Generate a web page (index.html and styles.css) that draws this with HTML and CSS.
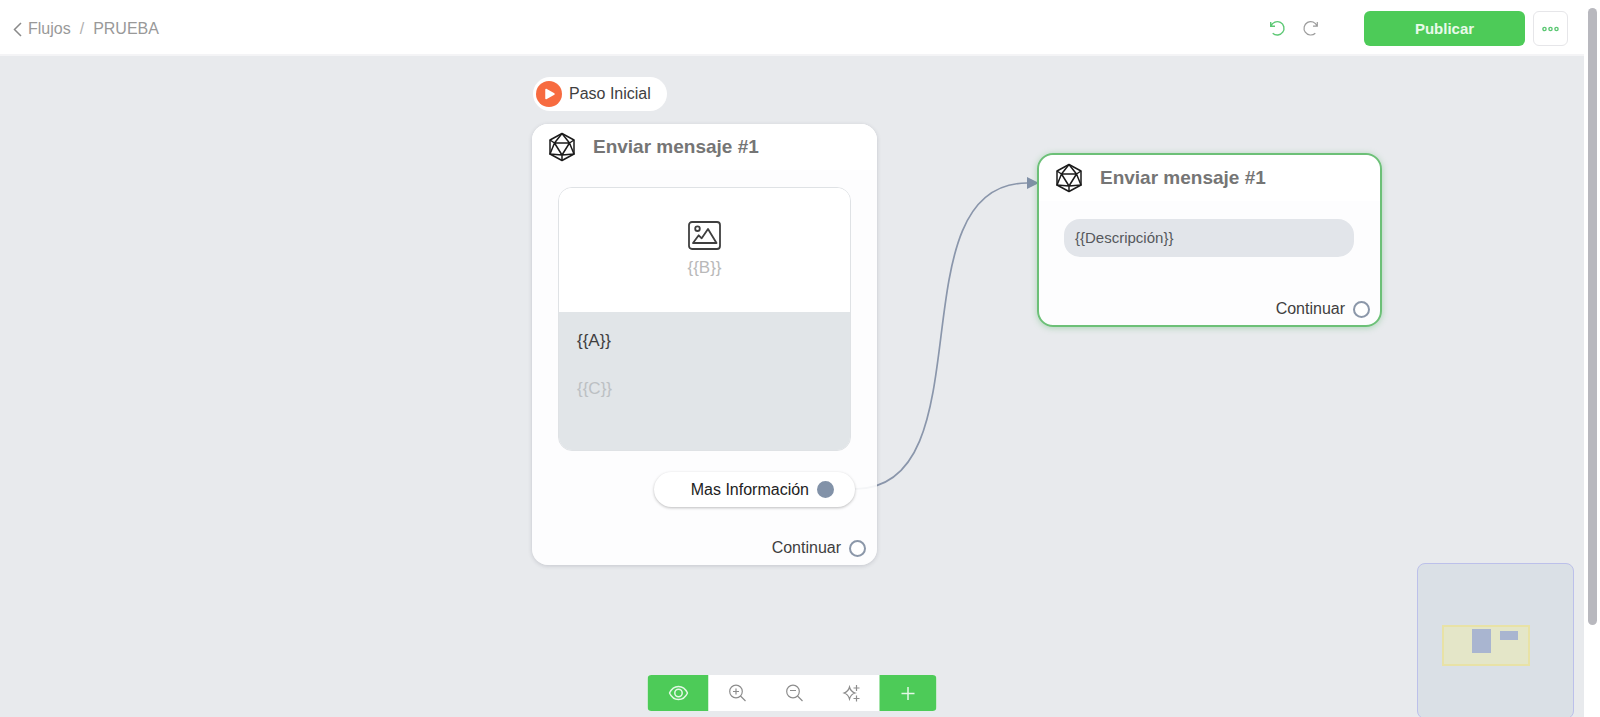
FILE: index.html
```html
<!DOCTYPE html>
<html lang="es">
<head>
<meta charset="utf-8">
<title>Flujos / PRUEBA</title>
<link rel="stylesheet" href="styles.css">
</head>
<body>
<svg class="symbols" aria-hidden="true">
  <symbol id="ico" viewBox="0 0 28 30">
    <g fill="none" stroke="#1b1b1b" stroke-width="1.5" stroke-linejoin="round">
      <path d="M14 1.500 26 8v14l-12 6.500L2 22V8z"/>
      <path d="M6.500 11h15L14 23zM14 1.500 6.500 11 2 8M14 1.500 21.500 11 26 8M6.500 11 2 22l12 1 12-1-4.500-11M14 23v5.500"/>
    </g>
  </symbol>
</svg>
<div class="app">
  <div class="workspace">
    <header class="topbar">
      <nav class="crumbs">
        <a class="back" href="#">
          <svg width="9" height="15" viewBox="0 0 9 15"><path d="M8 1 1.500 7.500 8 14" fill="none" stroke="#8a8a8a" stroke-width="1.5"/></svg>
          Flujos</a>
        <span class="slash">/</span>
        <span>PRUEBA</span>
      </nav>
      <div class="actions">
        <div class="history">
          <button class="plain" aria-label="Deshacer">
            <svg width="17" height="17" viewBox="0 0 17 17" fill="none" stroke="#5cc874" stroke-width="1.4"><path d="M1.700 2v4.200h4.300M2 6a6.700 6.700 0 1 1 1.700 7.200"/></svg>
          </button>
          <button class="plain" aria-label="Rehacer">
            <svg width="17" height="17" viewBox="0 0 17 17" fill="none" stroke="#9b9b9b" stroke-width="1.2"><path d="M15.300 2v4.200H11M15 6a6.700 6.700 0 1 0-1.700 7.200"/></svg>
          </button>
        </div>
        <button class="publish">Publicar</button>
        <button class="more" aria-label="Más opciones">
          <svg width="17" height="6" viewBox="0 0 17 6" fill="none" stroke="#5cc874" stroke-width="1.4"><circle cx="2.500" cy="3" r="1.600"/><circle cx="8.500" cy="3" r="1.600"/><circle cx="14.500" cy="3" r="1.600"/></svg>
        </button>
      </div>
    </header>

    <main class="canvas">
      <svg class="edges" aria-hidden="true">
        <path d="M855 433C989 433 893 127 1027 127" fill="none" stroke="#8a96ab" stroke-width="1.7"/>
        <path d="M1027 121l12 6-12 6z" fill="#8090a7"/>
      </svg>

      <div class="start-tag">
        <svg width="26" height="26" viewBox="0 0 26 26"><circle cx="13" cy="13" r="13" fill="#f76b40"/><path d="M10 8.500v9l8-4.500z" fill="#fff" stroke="#fff" stroke-width="1.500" stroke-linejoin="round"/></svg>
        <span>Paso Inicial</span>
      </div>

      <article class="node node-main">
        <h2 class="node-head"><svg class="node-icon"><use href="#ico"/></svg>Enviar mensaje #1</h2>
        <div class="media">
          <div class="picture">
            <svg width="33" height="29" viewBox="0 0 33 29" fill="none" stroke="#3f3f3f" stroke-width="1.800" stroke-linejoin="round"><rect x="1" y="1" width="31" height="27" rx="3"/><circle cx="9.500" cy="7.700" r="2.300"/><path d="M5 22h23.500L20 8l-6.300 9.300-3-3z"/></svg>
            <span>{{B}}</span>
          </div>
          <div class="copy">
            <span class="copy-title">{{A}}</span>
            <span class="copy-text">{{C}}</span>
          </div>
        </div>
        <button class="option">Mas Información<span class="port port-on"></span></button>
        <div class="next">Continuar<span class="port"></span></div>
      </article>

      <article class="node node-active">
        <h2 class="node-head"><svg class="node-icon"><use href="#ico"/></svg>Enviar mensaje #1</h2>
        <div class="bubble">{{Descripción}}</div>
        <div class="next">Continuar<span class="port"></span></div>
      </article>

      <div class="toolbar">
        <button class="tool tool-green tool-wide" aria-label="Vista previa">
          <svg width="20" height="16" viewBox="0 0 20 16" fill="none" stroke="#e4f8e6" stroke-width="1.500"><path d="M1 8C3 3.700 6 1.400 10 1.400S17 3.700 19 8c-2 4.300-5 6.600-9 6.600S3 12.300 1 8z"/><circle cx="10" cy="8" r="3.700"/></svg>
        </button>
        <button class="tool" aria-label="Acercar">
          <svg width="18" height="18" viewBox="0 0 18 18" fill="none" stroke="#8d8d8d" stroke-width="1.200"><circle cx="7.500" cy="7.500" r="6.300"/><path d="M12 12l5 5M7.500 4.500v6M4.500 7.500h6"/></svg>
        </button>
        <button class="tool" aria-label="Alejar">
          <svg width="18" height="18" viewBox="0 0 18 18" fill="none" stroke="#8d8d8d" stroke-width="1.200"><circle cx="7.500" cy="7.500" r="6.300"/><path d="M12 12l5 5M4.500 6.500h6"/></svg>
        </button>
        <button class="tool" aria-label="Ordenar">
          <svg width="18" height="18" viewBox="0 0 18 18" fill="none" stroke="#8d8d8d" stroke-width="1.200"><path d="M7 3c1 3.700 2 4.900 5.500 6C9 10.100 8 11.300 7 15c-1-3.700-2-4.900-5.500-6C5 7.900 6 6.700 7 3zM14 1v6M11 4h6M14 11.500v6M11 14.500h6"/></svg>
        </button>
        <button class="tool tool-green" aria-label="Añadir">
          <svg width="15" height="15" viewBox="0 0 15 15" fill="none" stroke="#e4f8e6" stroke-width="1.500"><path d="M7.500 1v13M1 7.500h13"/></svg>
        </button>
      </div>

      <div class="minimap">
        <svg width="155" height="154" viewBox="0 0 155 154" aria-hidden="true"><rect x="25" y="62" width="86" height="39" fill="#e4e6c8" stroke="#e8e2a6" stroke-width="2"/><rect x="54" y="65" width="19" height="24" fill="#a9b5d0"/><rect x="82" y="67" width="18" height="9" fill="#a9b5d0"/></svg>
      </div>
    </main>
  </div>
  <div class="scroll"><div class="thumb"></div></div>
</div>
</body>
</html>
```
FILE: styles.css
```css
* { box-sizing: border-box; }
body {
  margin: 0;
  font: 16px/20px "Liberation Sans", Arial, sans-serif;
  color: #3f3f3f;
  background: #fff;
}
button { font: inherit; color: inherit; border: 0; padding: 0; cursor: pointer; }
svg { display: block; flex: none; }
.symbols { position: absolute; width: 0; height: 0; }

.app { display: flex; height: 100vh; overflow: hidden; }
.workspace { flex: 1; min-width: 0; display: flex; flex-direction: column; }

.topbar {
  display: flex;
  align-items: center;
  justify-content: space-between;
  height: 56px;
  flex: none;
  padding: 0 16px 0 13px;
  border-bottom: 2px solid #f4f4f6;
}
.crumbs { display: flex; align-items: center; gap: 9px; color: #999; padding-top: 4px; }
.back { display: flex; align-items: center; gap: 6px; color: inherit; text-decoration: none; }
.slash { color: #b0b0b0; }
.actions { display: flex; align-items: center; gap: 8px; padding-top: 3px; }
.history { display: flex; gap: 16px; margin-right: 37px; }
.plain { background: none; }
.publish {
  width: 161px;
  height: 35px;
  border-radius: 6px;
  background: #4dcb58;
  color: #e9faea;
  font-size: 15px;
  font-weight: bold;
}
.more {
  display: flex;
  align-items: center;
  justify-content: center;
  width: 35px;
  height: 35px;
  border: 1px solid #e6e6e9;
  border-radius: 6px;
  background: #fff;
}

.canvas { position: relative; flex: 1; overflow: hidden; background: #e8eaed; }
.edges { position: absolute; inset: 0; width: 100%; height: 100%; }

.start-tag {
  position: absolute;
  left: 533px;
  top: 21px;
  display: flex;
  align-items: center;
  gap: 7px;
  height: 34px;
  padding: 0 16px 0 3px;
  border-radius: 17px;
  background: #fff;
}

.node {
  position: absolute;
  width: 345px;
  border-radius: 16px;
  background: rgba(255, 255, 255, 0.9);
  box-shadow: 0 1px 4px rgba(60, 60, 80, 0.2);
  display: flex;
  flex-direction: column;
}
.node-main { left: 532px; top: 68px; padding-bottom: 7px; }
.node-active {
  left: 1037px;
  top: 97px;
  border: 2px solid #6cc077;
  box-shadow: 0 1px 6px rgba(80, 180, 100, 0.4);
  padding-bottom: 6px;
}
.node-head {
  display: flex;
  align-items: center;
  gap: 17px;
  height: 46px;
  margin: 0;
  padding: 0 16px;
  border-radius: 16px 16px 0 0;
  background: #fff;
  color: #757575;
  font-size: 19px;
  font-weight: bold;
}
.node-icon { width: 28px; height: 30px; }

.media {
  margin: 17px 26px 0;
  border-radius: 14px;
  overflow: hidden;
  border: 1px solid #dfe2e5;
}
.picture {
  display: flex;
  flex-direction: column;
  align-items: center;
  gap: 8px;
  height: 124px;
  padding-top: 33px;
  background: #fff;
  color: #b9b9b9;
}
.copy {
  display: flex;
  flex-direction: column;
  gap: 28px;
  height: 138px;
  padding: 19px 18px;
  background: #e1e5e8;
}
.picture, .copy { font-size: 17px; }
.copy-text { color: #bcc0c3; }

.option {
  display: flex;
  align-items: center;
  justify-content: flex-end;
  gap: 8px;
  align-self: flex-end;
  width: 201px;
  height: 35px;
  margin: 21px 22px 0 0;
  padding-right: 21px;
  border-radius: 18px;
  background: #fff;
  color: #222;
  box-shadow: 0 1px 3px rgba(0, 0, 0, 0.26);
}
.port { width: 17px; height: 17px; border: 2px solid #8b97a9; border-radius: 50%; background: #fff; }
.port-on { background: #8292a8; border-color: #8292a8; }
.next {
  display: flex;
  align-items: center;
  justify-content: flex-end;
  gap: 8px;
  padding-right: 11px;
  margin-top: 31px;
}
.node-active .next { margin-top: 42px; padding-right: 10px; }
.bubble {
  margin: 18px 26px 0 25px;
  padding: 9px 11px;
  border-radius: 16px;
  background: #e2e5ea;
  color: #55585c;
  font-size: 15px;
}

.toolbar {
  position: absolute;
  left: 50%;
  bottom: 6px;
  transform: translateX(-50%);
  display: flex;
  height: 36px;
  border-radius: 4px;
  overflow: hidden;
  background: #fff;
}
.tool {
  display: flex;
  align-items: center;
  justify-content: center;
  width: 57px;
  background: #fff;
}
.tool-green { background: #4dcb58; }
.tool-wide { width: 61px; }

.minimap {
  position: absolute;
  right: 10px;
  bottom: -2px;
  border: 1px solid #bcc0ea;
  border-radius: 8px;
  background: #dae0e6;
}

.scroll { width: 16px; flex: none; padding: 8px 3px 0 4px; }
.thumb { height: 87%; border-radius: 5px; background: #b8b8be; }
```
